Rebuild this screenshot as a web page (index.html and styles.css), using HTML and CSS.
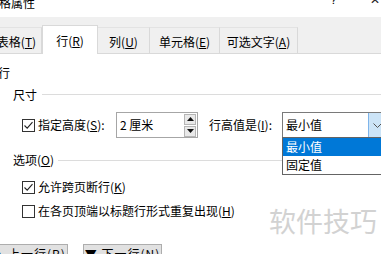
FILE: index.html
```html
<!DOCTYPE html>
<html>
<head>
<meta charset="utf-8">
<link rel="stylesheet" href="styles.css">
</head>
<body>
<div class="dialog">
  <div class="titlebar">
    <span class="title">格属性</span>
    <span class="help">?</span>
    <span class="close">✕</span>
  </div>
  <div class="tabs">
    <div class="tab tab-table">表格(<u>T</u>)</div>
    <div class="tab tab-row active">行(<u>R</u>)</div>
    <div class="tab tab-col">列(<u>U</u>)</div>
    <div class="tab tab-cell">单元格(<u>E</u>)</div>
    <div class="tab tab-alt">可选文字(<u>A</u>)</div>
  </div>
  <div class="panel">
    <div class="heading">行</div>
    <div class="group-label size-label"><span>尺寸</span><span class="line"></span></div>
    <div class="size-row">
      <span class="checkbox"><svg width="13" height="13" viewBox="0 0 13 13"><rect x="0.5" y="0.5" width="12" height="12" fill="#fff" stroke="#333"/><path d="M2.5 6.5 L5.2 9.2 L10.5 3.2" fill="none" stroke="#222" stroke-width="1.1"/></svg></span>
      <span class="label label-height">指定高度(<u>S</u>):</span>
      <div class="spin">
        <span class="spin-value">2 厘米</span>
        <div class="spin-buttons">
          <span class="spin-btn"><svg width="7" height="4" viewBox="0 0 7 4"><path d="M0 4 L3.5 0 L7 4 Z" fill="#111"/></svg></span>
          <span class="spin-btn"><svg width="7" height="4" viewBox="0 0 7 4"><path d="M0 0 L3.5 4 L7 0 Z" fill="#111"/></svg></span>
        </div>
      </div>
      <span class="label label-rule">行高值是(<u>I</u>):</span>
      <div class="combo">
        <span class="combo-value">最小值</span>
        <span class="combo-arrow"><svg width="9" height="5" viewBox="0 0 9 5"><path d="M0.5 0.5 L4.5 4.5 L8.5 0.5" fill="none" stroke="#555" stroke-width="1"/></svg></span>
        <div class="combo-list">
          <div class="combo-item selected">最小值</div>
          <div class="combo-item">固定值</div>
        </div>
      </div>
    </div>
    <div class="group-label options-label"><span>选项(<u>O</u>)</span><span class="line"></span></div>
    <div class="check-row first">
      <span class="checkbox"><svg width="13" height="13" viewBox="0 0 13 13"><rect x="0.5" y="0.5" width="12" height="12" fill="#fff" stroke="#333"/><path d="M2.5 6.5 L5.2 9.2 L10.5 3.2" fill="none" stroke="#222" stroke-width="1.1"/></svg></span>
      <span class="label">允许跨页断行(<u>K</u>)</span>
    </div>
    <div class="check-row second">
      <span class="checkbox"><svg width="13" height="13" viewBox="0 0 13 13"><rect x="0.5" y="0.5" width="12" height="12" fill="#fff" stroke="#333"/></svg></span>
      <span class="label">在各页顶端以标题行形式重复出现(<u>H</u>)</span>
    </div>
    <div class="buttons">
      <div class="btn">▲ 上一行(<u>P</u>)</div>
      <div class="btn">▼ 下一行(<u>N</u>)</div>
    </div>
  </div>
  <div class="watermark">软件技巧</div>
</div>
</body>
</html>
```

FILE: styles.css
```css
html, body {
  margin: 0;
  padding: 0;
  background: #fff;
}
body {
  width: 381px;
  height: 254px;
  overflow: hidden;
  font-family: "Noto Sans CJK SC", "Noto Sans", sans-serif;
  font-size: 12px;
  color: #000;
}
u { text-decoration: underline; text-underline-offset: 1px; }
.dialog {
  position: relative;
  width: 381px;
  height: 254px;
  overflow: hidden;
}
.titlebar {
  height: 17px;
  display: flex;
  align-items: flex-start;
  overflow: hidden;
  background: #fff;
}
.title {
  margin-top: -6px;
  margin-left: -1px;
  line-height: 18px;
  font-size: 12px;
}
.help {
  margin-left: auto;
  margin-top: -9px;
  line-height: 18px;
  font-size: 12px;
  font-family: "Liberation Sans", sans-serif;
}
.close {
  margin-left: 33px;
  margin-right: 1px;
  margin-top: -10px;
  line-height: 18px;
  font-size: 12px;
  color: #222;
}
.tabs {
  height: 36px;
  background: #f0f0f0;
  border-bottom: 1px solid #d9d9d9;
  display: flex;
  align-items: flex-end;
}
.tab {
  box-sizing: border-box;
  height: 26px;
  padding-top: 5px;
  line-height: 18px;
  text-align: center;
  border-top: 1px solid #e3e3e3;
  border-right: 1px solid #d9d9d9;
  background: #f0f0f0;
}
.tab-table { width: 52px; margin-left: -10px; padding-left: 2px; }
.tab-row { width: 56px; }
.tab-col { width: 52px; }
.tab-cell { width: 70px; }
.tab-alt { width: 78px; }
.tab.active {
  height: 29px;
  margin-bottom: -1px;
  padding-top: 6px;
  background: #fff;
  border: 1px solid #d9d9d9;
  border-bottom: none;
}
.panel {
  padding-top: 10px;
}
.heading {
  margin-left: -2px;
  line-height: 18px;
}
.group-label {
  display: flex;
  align-items: center;
  margin-left: 13px;
  line-height: 18px;
}
.group-label .line {
  flex: 1;
  height: 1px;
  background: #dcdcdc;
}
.size-label { margin-top: 4px; }
.size-label .line { margin-left: 5px; margin-top: -1px; }
.options-label { margin-top: 13px; }
.options-label .line { margin-left: 4px; }
.size-row {
  margin-top: 8px;
  height: 26px;
  display: flex;
  align-items: center;
  padding-left: 22px;
}
.checkbox {
  width: 13px;
  height: 13px;
  display: block;
  flex: none;
}
.checkbox svg { display: block; }
.label {
  line-height: 18px;
  margin-left: 3px;
  white-space: nowrap;
}
.label-height { width: 78px; flex: none; }
.label-rule { width: 73px; flex: none; margin-left: 11px; }
.spin {
  box-sizing: border-box;
  width: 82px;
  height: 26px;
  border: 1px solid #a6a6a6;
  display: flex;
  align-items: center;
  flex: none;
}
.spin-value {
  margin-left: 3px;
  line-height: 18px;
  flex: 1;
}
.spin-buttons {
  display: flex;
  flex-direction: column;
  gap: 1px;
  margin-right: 1px;
}
.spin-btn {
  box-sizing: border-box;
  width: 12px;
  height: 11px;
  background: #e9e9e9;
  border: 1px solid #b5b5b5;
  display: flex;
  align-items: center;
  justify-content: center;
}
.spin-btn svg { display: block; }
.combo {
  position: relative;
  box-sizing: border-box;
  width: 106px;
  height: 26px;
  border: 1px solid #7a7a7a;
  display: flex;
  align-items: center;
  flex: none;
}
.combo-value {
  flex: 1;
  margin-left: 3px;
  line-height: 18px;
}
.combo-arrow {
  box-sizing: border-box;
  width: 19px;
  height: 24px;
  background: #cce4f7;
  border-left: 1px solid #7eb4ea;
  display: flex;
  align-items: center;
  padding-left: 4px;
}
.combo-arrow svg { display: block; }
.combo-list {
  position: absolute;
  top: 24px;
  left: -1px;
  width: 106px;
  box-sizing: border-box;
  border: 1px solid #646464;
  background: #fff;
  padding: 0;
}
.combo-item {
  height: 18px;
  line-height: 18px;
  padding-left: 3px;
}
.combo-item.selected {
  background: #0078d7;
  color: #fff;
}
.check-row {
  display: flex;
  align-items: center;
  padding-left: 22px;
  height: 18px;
}
.check-row.first { margin-top: 9px; }
.check-row.second { margin-top: 6px; }
.buttons {
  margin-top: 24px;
  margin-left: -11px;
  display: flex;
  gap: 15px;
}
.btn {
  box-sizing: border-box;
  width: 79px;
  height: 24px;
  border: 1px solid #adadad;
  background: #e1e1e1;
  line-height: 18px;
  text-align: center;
  letter-spacing: 1px;
  white-space: nowrap;
}
.watermark {
  position: absolute;
  left: 269px;
  top: 201px;
  font-size: 27px;
  line-height: 40px;
  color: #d2d2d2;
  letter-spacing: 0px;
}
```
